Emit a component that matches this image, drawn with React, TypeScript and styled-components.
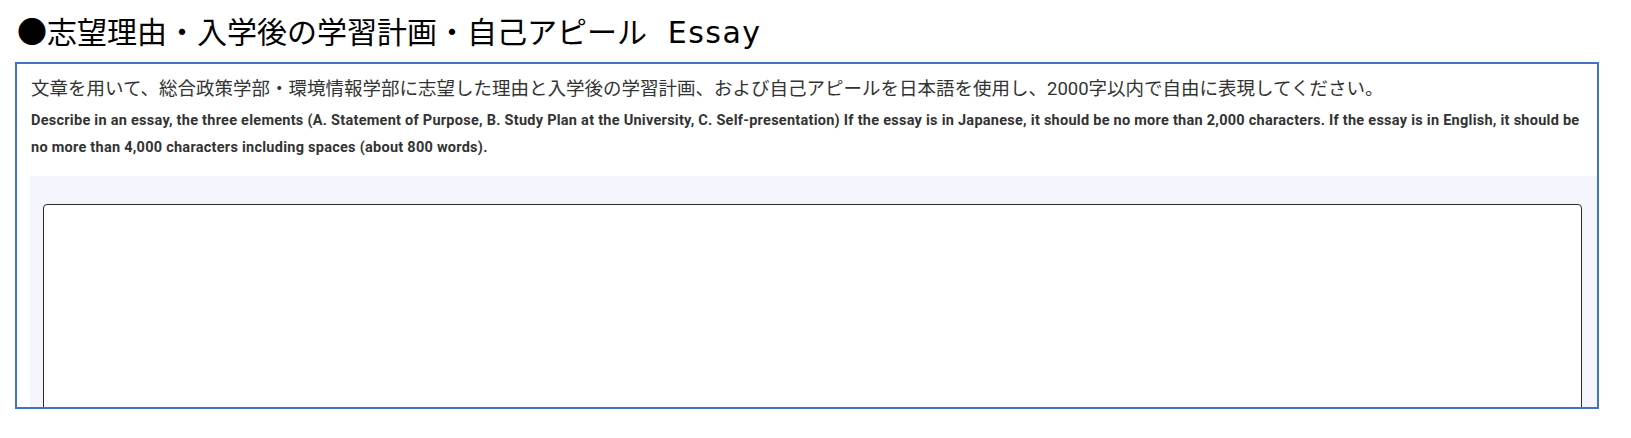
import styled, { createGlobalStyle } from "styled-components";

const GlobalStyle = createGlobalStyle`
  body {
    margin: 0;
    background: #ffffff;
    font-family: Roboto, "Noto Sans CJK JP", sans-serif;
  }
`;

const Page = styled.div`
  padding: 0 0 0 15px;
`;

const Heading = styled.h2`
  margin: 0;
  padding: 7px 0 6px 2px;
  font-family: "Noto Sans CJK JP", sans-serif;
  font-size: 30px;
  font-weight: 400;
  line-height: 46px;
  color: #000000;
  white-space: nowrap;
  word-spacing: 14px;
`;

const Latin = styled.span`
  font-family: "DejaVu Sans", sans-serif;
  letter-spacing: 1.5px;
  word-spacing: 0;
`;

const Frame = styled.section`
  box-sizing: border-box;
  width: 1584px;
  height: 347px;
  border: 2px solid #4472c4;
  overflow: hidden;
  padding-left: 13px;
`;

const Intro = styled.div`
  padding: 10px 4px 15px 1px;
`;

const JaText = styled.p`
  margin: 0;
  font-size: 18.5px;
  line-height: 30px;
  color: #333333;
`;

const EnText = styled.p`
  margin: 3px 0 0;
  font-family: Roboto, sans-serif;
  font-size: 14.5px;
  font-weight: 700;
  letter-spacing: 0.26px;
  line-height: 27px;
  color: #333333;
  white-space: nowrap;
`;

const Panel = styled.div`
  background: #f3f4fc;
  padding: 28px 15px 40px 13px;
`;

const Answer = styled.textarea`
  display: block;
  box-sizing: border-box;
  width: 100%;
  height: 320px;
  border: 1px solid #2b2b2b;
  border-radius: 4px;
  background: #ffffff;
  resize: none;
  font-size: 16px;
`;

export default function App() {
  return (
    <Page>
      <GlobalStyle />
      <Heading>
        ●志望理由・入学後の学習計画・自己アピール <Latin>Essay</Latin>
      </Heading>
      <Frame>
        <Intro>
          <JaText>
            文章を用いて、総合政策学部・環境情報学部に志望した理由と入学後の学習計画、および自己アピールを日本語を使用し、2000字以内で自由に表現してください。
          </JaText>
          <EnText>
            Describe in an essay, the three elements (A. Statement of Purpose, B. Study Plan at the University, C. Self-presentation) If the essay is in Japanese, it should be no more than 2,000 characters. If the essay is in English, it should be
            <br />
            no more than 4,000 characters including spaces (about 800 words).
          </EnText>
        </Intro>
        <Panel>
          <Answer />
        </Panel>
      </Frame>
    </Page>
  );
}
